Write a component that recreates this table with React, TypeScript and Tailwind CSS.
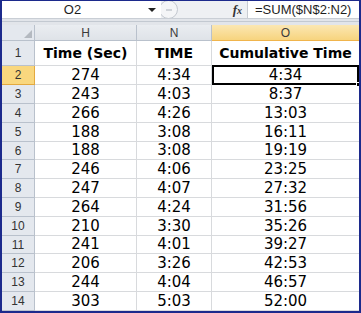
import React from "react";

type Row = { n: number; sec: string; time: string; cum: string };

const ROWS: Row[] = [
  { n: 2, sec: "274", time: "4:34", cum: "4:34" },
  { n: 3, sec: "243", time: "4:03", cum: "8:37" },
  { n: 4, sec: "266", time: "4:26", cum: "13:03" },
  { n: 5, sec: "188", time: "3:08", cum: "16:11" },
  { n: 6, sec: "188", time: "3:08", cum: "19:19" },
  { n: 7, sec: "246", time: "4:06", cum: "23:25" },
  { n: 8, sec: "247", time: "4:07", cum: "27:32" },
  { n: 9, sec: "264", time: "4:24", cum: "31:56" },
  { n: 10, sec: "210", time: "3:30", cum: "35:26" },
  { n: 11, sec: "241", time: "4:01", cum: "39:27" },
  { n: 12, sec: "206", time: "3:26", cum: "42:53" },
  { n: 13, sec: "244", time: "4:04", cum: "46:57" },
  { n: 14, sec: "303", time: "5:03", cum: "52:00" },
];

// rows are not all the same height in the screenshot (scaled capture)
const rowH = (i: number) => (i === 4 || i === 9 ? "h-[18px]" : "h-[19px]");

const ui = "font-['Liberation_Sans',Arial,sans-serif]";
const cellFont = "font-['DejaVu_Sans',Verdana,sans-serif]";

export default function App() {
  return (
    <div className="w-[361px] h-[313px] overflow-hidden bg-white border-[#1c2a8c] border-x-2 border-b-2 border-t">
      {/* formula bar */}
      <div className={`flex h-[17px] items-stretch text-[13px] text-[#1e1e1e] ${ui}`}>
        <div className="w-[141px] flex items-center justify-center bg-white">O2</div>
        <div className="w-[18px] flex items-center justify-center bg-white">
          <span className="block w-0 h-0 border-x-[4px] border-x-transparent border-t-[4px] border-t-[#222]" />
        </div>
        <div className="w-[86px] flex items-center justify-between bg-[#eef0f3] pr-[5px] overflow-hidden">
          <div className="-ml-[2px] w-[19px] h-[19px] shrink-0 rounded-full border border-[#c3c8cf] bg-[#f4f5f7] flex items-center justify-center">
            <span className="block w-[6px] h-[2px] bg-[#cfd3d8]" />
          </div>
          <span className="italic font-bold text-[13px] font-['Liberation_Serif',serif] text-[#333]">
            f<span className="text-[10px]">x</span>
          </span>
        </div>
        <div className="w-px bg-[#c8ccd2]" />
        <div className="flex-1 flex items-center pl-[7px] bg-white">=SUM($N$2:N2)</div>
      </div>

      {/* gap strip */}
      <div className="h-[7px] bg-[#e2e5ea] border-t border-[#c9ced5] flex flex-col">
        <div className="mt-[2px] h-px bg-[#c3c9d1]" />
      </div>

      {/* sheet */}
      <div className="grid grid-cols-[33px_102px_75px_147px]">
        {/* column headers */}
        <div className="relative h-[16px] bg-[#e4e8ee] border-r border-b border-[#b9c1cc]">
          <span className="absolute right-[2px] bottom-[2px] w-0 h-0 border-l-[8px] border-l-transparent border-b-[8px] border-b-[#b4b9c0]" />
        </div>
        <div className={`h-[16px] flex items-center justify-center text-[12px] text-[#3a3a3a] bg-gradient-to-b from-[#eaedf1] to-[#dfe3e8] border-r border-b border-[#b9c1cc] ${ui}`}>H</div>
        <div className={`h-[16px] flex items-center justify-center text-[12px] text-[#3a3a3a] bg-gradient-to-b from-[#eaedf1] to-[#dfe3e8] border-r border-b border-[#b9c1cc] ${ui}`}>N</div>
        <div className={`h-[16px] flex items-center justify-center text-[12px] text-[#3a3a3a] bg-gradient-to-b from-[#fbe7b2] to-[#f7d47e] border-b border-[#f0b44c] ${ui}`}>O</div>

        {/* row 1 */}
        <div className={`h-[25px] flex items-center justify-center text-[12px] text-[#333] bg-[#e4e8ee] border-r border-b border-[#b9c1cc] ${ui}`}>1</div>
        <div className={`h-[25px] flex items-center justify-center text-[14px] font-bold text-black border-r border-b border-[#d8dadd] ${cellFont}`}>Time (Sec)</div>
        <div className={`h-[25px] flex items-center justify-center text-[14px] font-bold text-black border-r border-b border-[#d8dadd] ${cellFont}`}>TIME</div>
        <div className={`h-[25px] flex items-center justify-center text-[14px] font-bold text-black border-b border-[#d8dadd] ${cellFont}`}>Cumulative Time</div>

        {ROWS.map((r, i) => {
          const h = rowH(i);
          const active = r.n === 2;
          return (
            <React.Fragment key={r.n}>
              <div
                className={`${h} flex items-center justify-center text-[12px] text-[#333] border-r border-b ${ui} ${
                  active ? "bg-[#f9d77e] border-[#e3a93f]" : "bg-[#e4e8ee] border-[#b9c1cc]"
                }`}
              >
                {r.n}
              </div>
              <div className={`${h} flex items-center justify-center text-[15px] text-black border-r border-b border-[#d8dadd] ${cellFont}`}>{r.sec}</div>
              <div className={`${h} flex items-center justify-center text-[15px] text-black border-r border-b border-[#d8dadd] ${cellFont}`}>{r.time}</div>
              <div className={`${h} relative flex items-center justify-center text-[15px] text-black border-b border-[#d8dadd] ${cellFont}`}>
                {active && (
                  <>
                    <span className="absolute -top-px left-0 right-0 -bottom-px border-2 border-black" />
                    <span className="absolute right-[-2px] bottom-[-3px] w-[5px] h-[5px] bg-black border border-white" />
                  </>
                )}
                {r.cum}
              </div>
            </React.Fragment>
          );
        })}
      </div>
    </div>
  );
}
